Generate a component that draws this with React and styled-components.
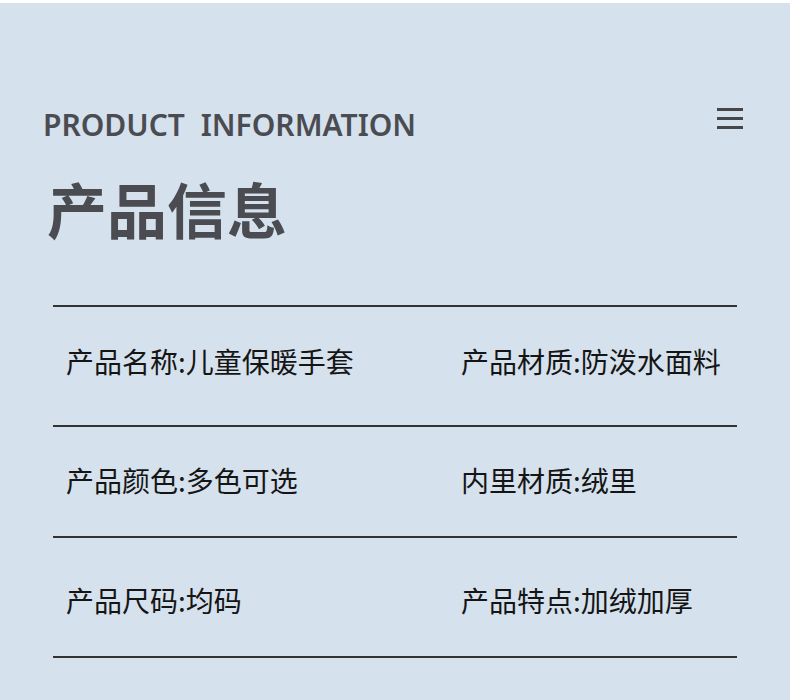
import React from 'react';
import styled, { createGlobalStyle } from 'styled-components';

const GlobalStyle = createGlobalStyle`
  body {
    margin: 0;
    background: #d5e1ec;
    font-family: "Noto Sans CJK SC", sans-serif;
  }
`;

const Page = styled.div`
  width: 790px;
  height: 700px;
  box-sizing: border-box;
  border-top: 3px solid #ffffff;
  background: #d5e1ec;
  overflow: hidden;
`;

const Header = styled.header`
  display: flex;
  justify-content: space-between;
  align-items: flex-start;
  padding: 100px 47px 0 43px;
`;

const EnTitle = styled.h2`
  margin: 0;
  font-family: "Noto Sans", sans-serif;
  font-size: 30px;
  font-weight: 600;
  line-height: 44px;
  word-spacing: 8px;
  color: #4a4c52;
`;

const MenuButton = styled.button`
  display: flex;
  flex-direction: column;
  gap: 6px;
  width: 26px;
  margin-top: 5px;
  padding: 0;
  border: 0;
  background: none;
  cursor: pointer;

  span {
    display: block;
    height: 3px;
    background: #44464a;
  }
`;

const CnTitle = styled.h1`
  margin: 26px 0 0 47px;
  font-family: "Noto Sans CJK SC", sans-serif;
  font-size: 60px;
  font-weight: 700;
  line-height: 70px;
  color: #4a4c52;
`;

const Table = styled.div`
  margin: 62px 0 0 53px;
  width: 684px;
  border-top: 2px solid #333333;
`;

const Row = styled.div`
  display: grid;
  grid-template-columns: 395px 1fr;
  height: ${({ h }) => h}px;
  box-sizing: border-box;
  padding: ${({ pad }) => pad}px 0 0 13px;
  border-bottom: 2px solid #333333;
`;

const Cell = styled.div`
  font-family: "Noto Sans CJK SC", sans-serif;
  font-size: 28px;
  font-weight: 400;
  line-height: 36px;
  color: #151515;
  white-space: nowrap;
`;

const rows = [
  { h: 120, pad: 36, items: ['产品名称:儿童保暖手套', '产品材质:防泼水面料'] },
  { h: 111, pad: 35, items: ['产品颜色:多色可选', '内里材质:绒里'] },
  { h: 120, pad: 44, items: ['产品尺码:均码', '产品特点:加绒加厚'] },
];

const App = () => (
  <Page>
    <GlobalStyle />
    <Header>
      <EnTitle>PRODUCT INFORMATION</EnTitle>
      <MenuButton aria-label="menu">
        <span />
        <span />
        <span />
      </MenuButton>
    </Header>
    <CnTitle>产品信息</CnTitle>
    <Table>
      {rows.map((row, i) => (
        <Row key={i} h={row.h} pad={row.pad}>
          {row.items.map((text) => (
            <Cell key={text}>{text}</Cell>
          ))}
        </Row>
      ))}
    </Table>
  </Page>
);

export default App;
